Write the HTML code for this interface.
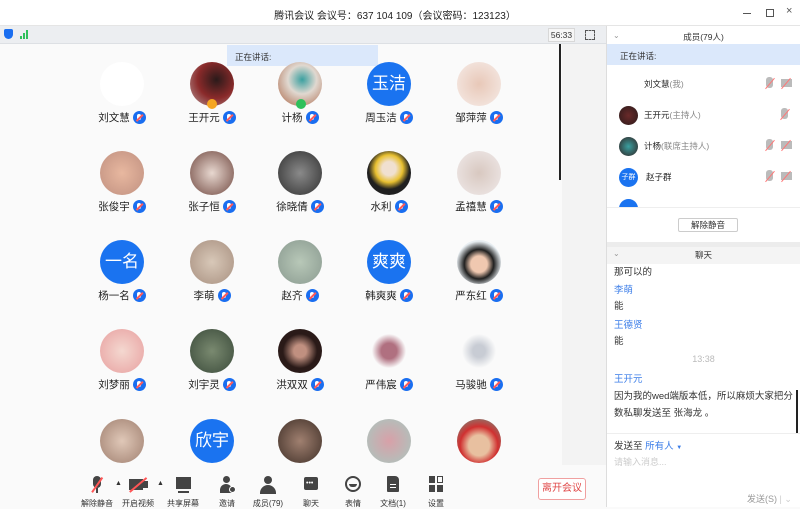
<!DOCTYPE html>
<html><head><meta charset="utf-8"><style>
*{margin:0;padding:0;box-sizing:border-box}
body{width:800px;height:507px;overflow:hidden;background:#fafafa;font-family:"Liberation Sans","Noto Sans CJK SC",sans-serif;position:relative;color:#333}
.a{position:absolute}
.av{position:absolute;width:44px;height:44px;border-radius:50%;overflow:hidden}
.bl{background:#1a73f0;color:#fff;font-size:17px;text-align:center;line-height:44px}
.nm{position:absolute;width:90px;text-align:center;font-size:10.5px;color:#222;white-space:nowrap}
.mi{display:inline-block;width:13px;height:13px;border-radius:50%;background:#1a6ef0;vertical-align:-3px;margin-left:3px;position:relative}
.mi:after{content:"";position:absolute;left:2px;top:6px;width:9px;height:1.5px;background:#ff5a5a;transform:rotate(-45deg)}
.mi:before{content:"";position:absolute;left:4.5px;top:2.5px;width:4px;height:6px;border-radius:2px;background:#fff}
.tb{position:absolute;top:474px;width:40px;text-align:center;font-size:8px;color:#333}
.tb .ic{height:20px;margin:0 auto 4px;position:relative}
.tb .ic div{background-color:#444}
.mr{position:absolute;left:607px;width:193px;height:30px;font-size:8.5px;color:#222}
.rt{position:absolute;font-size:9.5px;left:614px}
.sl{position:absolute;width:14px;height:1px;background:#f77;transform:rotate(-50deg)}
</style></head><body>
<div class="a" style="left:0;top:0;width:800px;height:26px;background:#fff;border-bottom:1px solid #e5e5e5"></div>
<div class="a" style="left:0;top:7px;width:790px;text-align:center;font-size:10px;color:#222">腾讯会议 会议号：637 104 109（会议密码：123123）</div>
<div class="a" style="left:743px;top:13px;width:8px;height:1px;background:#555"></div>
<div class="a" style="left:766px;top:9px;width:8px;height:8px;border:1px solid #555"></div>
<div class="a" style="left:786px;top:5px;font-size:11px;color:#555">×</div>
<div class="a" style="left:0;top:26px;width:607px;height:18px;background:#eceef1;border-bottom:1px solid #dde0e4"></div>
<div class="a" style="left:4px;top:29px;width:9px;height:10px;background:#1a6ef0;border-radius:2px 2px 5px 5px"></div>
<div class="a" style="left:20px;top:36px;width:2px;height:3px;background:#2ec05b"></div>
<div class="a" style="left:23px;top:33px;width:2px;height:6px;background:#2ec05b"></div>
<div class="a" style="left:26px;top:30px;width:2px;height:9px;background:#2ec05b"></div>
<div class="a" style="left:548px;top:28px;width:27px;height:14px;background:#f6f6f6;border:1px solid #d8d8d8;font-size:8.5px;text-align:center;line-height:12px">56:33</div>
<div class="a" style="left:585px;top:30px;width:10px;height:10px;border:1.5px dashed #555"></div>
<div class="a" style="left:562px;top:44px;width:45px;height:421px;background:#f3f3f3"></div>
<div class="a" style="left:559px;top:44px;width:2px;height:136px;background:#222"></div>
<div class="a" style="left:227px;top:45px;width:151px;height:21px;background:#dbe8fb;font-size:8.5px;padding:6px 0 0 8px">正在讲话:</div>

<div class="av" style="left:100px;top:62px;background:#fff"></div>
<div class="av" style="left:190px;top:62px;background:radial-gradient(circle at 60% 40%,#2a1a1a,#8a2a2a 50%,#b8a0a0)"></div>
<div class="a" style="left:207px;top:99px;width:10px;height:10px;border-radius:50%;background:#f5a623"></div>
<div class="av" style="left:278px;top:62px;background:radial-gradient(circle at 55% 40%,#3aa0a0,#e0d8d0 40%,#a86040)"></div>
<div class="a" style="left:296px;top:99px;width:10px;height:10px;border-radius:50%;background:#2ec05b"></div>
<div class="av bl" style="left:367px;top:62px">玉洁</div>
<div class="av" style="left:457px;top:62px;background:radial-gradient(circle,#e8c8b8,#f6ece8)"></div>
<div class="nm" style="left:77px;top:110px">刘文慧<i class="mi"></i></div>
<div class="nm" style="left:167px;top:110px">王开元<i class="mi"></i></div>
<div class="nm" style="left:255px;top:110px">计杨<i class="mi"></i></div>
<div class="nm" style="left:344px;top:110px">周玉洁<i class="mi"></i></div>
<div class="nm" style="left:434px;top:110px">邹萍萍<i class="mi"></i></div>
<div class="av" style="left:100px;top:151px;background:radial-gradient(circle,#e8b8a0,#c09080)"></div>
<div class="av" style="left:190px;top:151px;background:radial-gradient(circle,#e8d8d0,#704840)"></div>
<div class="av" style="left:278px;top:151px;background:radial-gradient(circle,#8a8a8a,#303030)"></div>
<div class="av" style="left:367px;top:151px;background:radial-gradient(circle at 50% 40%,#f0e0d0 20%,#e8c030 40%,#202020 60%)"></div>
<div class="av" style="left:457px;top:151px;background:radial-gradient(circle,#d8c8c0,#f0eaea)"></div>
<div class="nm" style="left:77px;top:199px">张俊宇<i class="mi"></i></div>
<div class="nm" style="left:167px;top:199px">张子恒<i class="mi"></i></div>
<div class="nm" style="left:255px;top:199px">徐晓倩<i class="mi"></i></div>
<div class="nm" style="left:344px;top:199px">水利<i class="mi"></i></div>
<div class="nm" style="left:434px;top:199px">孟禧慧<i class="mi"></i></div>
<div class="av bl" style="left:100px;top:240px">一名</div>
<div class="av" style="left:190px;top:240px;background:radial-gradient(circle,#d8c8b8,#a89080)"></div>
<div class="av" style="left:278px;top:240px;background:radial-gradient(circle,#b8c8b8,#8a9a90)"></div>
<div class="av bl" style="left:367px;top:240px">爽爽</div>
<div class="av" style="left:457px;top:240px;background:radial-gradient(circle at 50% 55%,#f0c8b0 25%,#202020 45%,#e8eef2 70%)"></div>
<div class="nm" style="left:77px;top:288px">杨一名<i class="mi"></i></div>
<div class="nm" style="left:167px;top:288px">李萌<i class="mi"></i></div>
<div class="nm" style="left:255px;top:288px">赵齐<i class="mi"></i></div>
<div class="nm" style="left:344px;top:288px">韩爽爽<i class="mi"></i></div>
<div class="nm" style="left:434px;top:288px">严东红<i class="mi"></i></div>
<div class="av" style="left:100px;top:329px;background:radial-gradient(circle,#f4d8d0,#e8a0a0)"></div>
<div class="av" style="left:190px;top:329px;background:radial-gradient(circle,#7a8a70,#3a4a3a)"></div>
<div class="av" style="left:278px;top:329px;background:radial-gradient(circle,#c09080 20%,#2a1a18 55%)"></div>
<div class="av" style="left:367px;top:329px;background:radial-gradient(circle,#b07080 25%,#fafafa 55%)"></div>
<div class="av" style="left:457px;top:329px;background:radial-gradient(circle,#c8ccd4 20%,#fafafa 55%)"></div>
<div class="nm" style="left:77px;top:377px">刘梦丽<i class="mi"></i></div>
<div class="nm" style="left:167px;top:377px">刘宇灵<i class="mi"></i></div>
<div class="nm" style="left:255px;top:377px">洪双双<i class="mi"></i></div>
<div class="nm" style="left:344px;top:377px">严伟宸<i class="mi"></i></div>
<div class="nm" style="left:434px;top:377px">马骏驰<i class="mi"></i></div>
<div class="av" style="left:100px;top:419px;background:radial-gradient(circle,#e0c8b8,#a08070)"></div>
<div class="av bl" style="left:190px;top:419px">欣宇</div>
<div class="av" style="left:278px;top:419px;background:radial-gradient(circle,#a08070,#403028)"></div>
<div class="av" style="left:367px;top:419px;background:radial-gradient(circle,#d8a0a8,#a8c8c0)"></div>
<div class="av" style="left:457px;top:419px;background:radial-gradient(circle at 50% 60%,#e8c0a0 30%,#d03030 55%,#60a090)"></div>

<div class="a" style="left:0;top:465px;width:607px;height:42px;background:#fafafa"></div>
<div class="tb" style="left:77px"><div class="ic"><div class="a" style="left:16px;top:2px;width:8px;height:12px;border-radius:4px"></div><div class="a" style="left:19px;top:14px;width:2px;height:5px"></div><div class="a" style="left:11px;top:10px;width:18px;height:1.5px;background-color:#f55!important;transform:rotate(-55deg)"></div></div>解除静音</div>
<div class="a" style="left:115px;top:480px;font-size:7px;color:#333">▲</div>
<div class="tb" style="left:118px"><div class="ic"><div class="a" style="left:11px;top:5px;width:14px;height:11px"></div><div class="a" style="left:25px;top:7px;width:5px;height:7px"></div><div class="a" style="left:9px;top:10px;width:22px;height:1.5px;background-color:#f55!important;transform:rotate(-40deg)"></div></div>开启视频</div>
<div class="a" style="left:157px;top:480px;font-size:7px;color:#333">▲</div>
<div class="tb" style="left:163px"><div class="ic"><div class="a" style="left:13px;top:3px;width:15px;height:12px"></div><div class="a" style="left:15px;top:17px;width:11px;height:2px"></div></div>共享屏幕</div>
<div class="tb" style="left:207px"><div class="ic"><div class="a" style="left:16px;top:2px;width:7px;height:7px;border-radius:50%"></div><div class="a" style="left:13px;top:10px;width:12px;height:9px;border-radius:6px 6px 0 0"></div><div class="a" style="left:22px;top:12px;width:7px;height:7px;border-radius:50%;border:1px solid #fff"></div></div>邀请</div>
<div class="tb" style="left:248px"><div class="ic"><div class="a" style="left:16px;top:2px;width:8px;height:8px;border-radius:50%"></div><div class="a" style="left:12px;top:11px;width:16px;height:9px;border-radius:8px 8px 0 0"></div></div>成员(79)</div>
<div class="tb" style="left:291px"><div class="ic"><div class="a" style="left:13px;top:3px;width:14px;height:13px;border-radius:2px"></div><div class="a" style="left:15px;top:8px;font-size:7px;color:#fff;line-height:4px;background:none!important">•••</div></div>聊天</div>
<div class="tb" style="left:333px"><div class="ic"><div class="a" style="left:12px;top:2px;width:16px;height:16px;border-radius:50%;border:2px solid #444;background:none!important"></div><div class="a" style="left:16px;top:10px;width:8px;height:3px;border-radius:0 0 4px 4px"></div></div>表情</div>
<div class="tb" style="left:373px"><div class="ic"><div class="a" style="left:14px;top:2px;width:12px;height:16px;border-radius:1px 4px 1px 1px"></div><div class="a" style="left:17px;top:10px;width:6px;height:1px;background-color:#fff!important"></div><div class="a" style="left:17px;top:13px;width:6px;height:1px;background-color:#fff!important"></div></div>文档(1)</div>
<div class="tb" style="left:416px"><div class="ic"><div class="a" style="left:13px;top:2px;width:6px;height:7px"></div><div class="a" style="left:21px;top:2px;width:6px;height:7px;border:1px solid #444;background:none!important"></div><div class="a" style="left:13px;top:11px;width:6px;height:7px"></div><div class="a" style="left:21px;top:11px;width:6px;height:7px"></div></div>设置</div>
<div class="a" style="left:538px;top:478px;width:48px;height:22px;border:1px solid #f0a0a0;border-radius:3px;background:#fff;color:#e04848;font-size:10px;text-align:center;line-height:20px">离开会议</div>

<div class="a" style="left:606px;top:26px;width:1px;height:481px;background:#ddd"></div>
<div class="a" style="left:607px;top:26px;width:193px;height:481px;background:#fff"></div>
<div class="a" style="left:613px;top:31px;font-size:8px;color:#999">⌄</div>
<div class="a" style="left:607px;top:31px;width:193px;text-align:center;font-size:8.5px">成员(79人)</div>
<div class="a" style="left:607px;top:44px;width:193px;height:21px;background:#dbe8fb;font-size:8.5px;padding:6px 0 0 13px">正在讲话:</div>
<div class="mr" style="top:75px"><span class="a" style="left:37px;top:3px">刘文慧<span style="color:#888">(我)</span></span></div>
<div class="mr" style="top:106px"><div class="a" style="left:12px;top:0;width:19px;height:19px;border-radius:50%;background:radial-gradient(circle,#6a2a2a,#2a1a1a)"></div><span class="a" style="left:37px;top:3px">王开元<span style="color:#888">(主持人)</span></span></div>
<div class="mr" style="top:137px"><div class="a" style="left:12px;top:0;width:19px;height:19px;border-radius:50%;background:radial-gradient(circle,#3aa0a0,#302020)"></div><span class="a" style="left:37px;top:3px">计杨<span style="color:#888">(联席主持人)</span></span></div>
<div class="mr" style="top:168px"><div class="a" style="left:12px;top:0;width:19px;height:19px;border-radius:50%;background:#1a73f0;color:#fff;font-size:7px;text-align:center;line-height:19px">子群</div><span class="a" style="left:39px;top:3px">赵子群</span></div>
<div class="mr" style="top:199px;height:8px;overflow:hidden"><div class="a" style="left:12px;top:0;width:19px;height:19px;border-radius:50%;background:#1a73f0"></div></div>
<div class="a" style="left:766px;top:77px;width:7px;height:11px;border-radius:3px;background:#bbb"></div><div class="a" style="left:781px;top:79px;width:11px;height:8px;background:#bbb"></div>
<div class="sl" style="left:763px;top:83px"></div><div class="sl" style="left:779px;top:83px"></div>
<div class="a" style="left:781px;top:108px;width:7px;height:11px;border-radius:3px;background:#bbb"></div>
<div class="sl" style="left:778px;top:114px"></div>
<div class="a" style="left:766px;top:139px;width:7px;height:11px;border-radius:3px;background:#bbb"></div><div class="a" style="left:781px;top:141px;width:11px;height:8px;background:#bbb"></div>
<div class="sl" style="left:763px;top:145px"></div><div class="sl" style="left:779px;top:145px"></div>
<div class="a" style="left:766px;top:170px;width:7px;height:11px;border-radius:3px;background:#bbb"></div><div class="a" style="left:781px;top:172px;width:11px;height:8px;background:#bbb"></div>
<div class="sl" style="left:763px;top:176px"></div><div class="sl" style="left:779px;top:176px"></div>
<div class="a" style="left:607px;top:207px;width:193px;height:1px;background:#eee"></div>
<div class="a" style="left:678px;top:218px;width:60px;height:14px;border:1px solid #ccc;border-radius:2px;font-size:8.5px;text-align:center;line-height:12px">解除静音</div>
<div class="a" style="left:607px;top:242px;width:193px;height:5px;background:#ececec"></div>
<div class="a" style="left:607px;top:247px;width:193px;height:17px;background:#f4f4f4;font-size:8.5px;text-align:center;line-height:17px">聊天</div>
<div class="a" style="left:613px;top:249px;font-size:8px;color:#999">⌄</div>
<div class="rt" style="top:264px">那可以的</div>
<div class="rt" style="top:282px;color:#3b7de8">李萌</div>
<div class="rt" style="top:298px">能</div>
<div class="rt" style="top:317px;color:#3b7de8">王德贤</div>
<div class="rt" style="top:333px">能</div>
<div class="a" style="left:607px;top:354px;width:193px;text-align:center;font-size:9px;color:#bbb">13:38</div>
<div class="rt" style="top:371px;color:#3b7de8">王开元</div>
<div class="rt" style="top:388px">因为我的wed端版本低，所以麻烦大家把分</div>
<div class="rt" style="top:405px">数私聊发送至 张海龙 。</div>
<div class="a" style="left:796px;top:390px;width:2px;height:43px;background:#222"></div>
<div class="a" style="left:607px;top:433px;width:193px;height:1px;background:#eee"></div>
<div class="rt" style="top:438px">发送至 <span style="color:#3b7de8">所有人</span> <span style="font-size:6px;color:#3b7de8">▼</span></div>
<div class="rt" style="top:455px;color:#ccc;font-size:9px">请输入消息...</div>
<div class="a" style="left:747px;top:492px;font-size:9px;color:#999">发送(S) <span style="color:#ccc">| ⌄</span></div>
</body></html>
